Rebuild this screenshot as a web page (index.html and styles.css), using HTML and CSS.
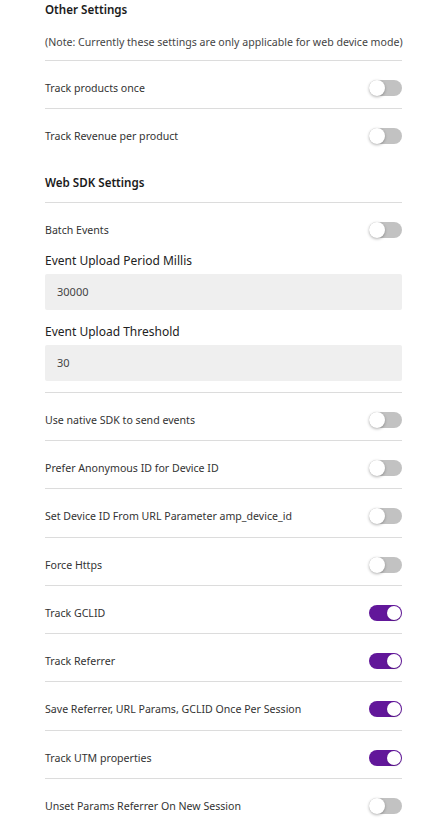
FILE: index.html
```html
<!DOCTYPE html>
<html lang="en">
<head>
<meta charset="utf-8">
<title>Settings</title>
<link rel="stylesheet" href="styles.css">
</head>
<body>
<main class="page">
  <section class="group">
    <h2 class="title title-first">Other Settings</h2>
    <p class="note">(Note: Currently these settings are only applicable for web device mode)</p>
  </section>
  <div class="row"><span class="label">Track products once</span><span class="toggle"></span></div>
  <div class="row row-last"><span class="label">Track Revenue per product</span><span class="toggle"></span></div>

  <h2 class="title">Web SDK Settings</h2>
  <div class="row row-last"><span class="label">Batch Events</span><span class="toggle"></span></div>
  <div class="fields">
    <div class="field">
      <label class="field-label">Event Upload Period Millis</label>
      <div class="input">30000</div>
    </div>
    <div class="field">
      <label class="field-label">Event Upload Threshold</label>
      <div class="input">30</div>
    </div>
  </div>
  <div class="row"><span class="label">Use native SDK to send events</span><span class="toggle"></span></div>
  <div class="row"><span class="label">Prefer Anonymous ID for Device ID</span><span class="toggle"></span></div>
  <div class="row"><span class="label">Set Device ID From URL Parameter amp_device_id</span><span class="toggle"></span></div>
  <div class="row"><span class="label">Force Https</span><span class="toggle"></span></div>
  <div class="row"><span class="label">Track GCLID</span><span class="toggle on"></span></div>
  <div class="row"><span class="label">Track Referrer</span><span class="toggle on"></span></div>
  <div class="row"><span class="label">Save Referrer, URL Params, GCLID Once Per Session</span><span class="toggle on"></span></div>
  <div class="row"><span class="label">Track UTM properties</span><span class="toggle on"></span></div>
  <div class="row row-last"><span class="label">Unset Params Referrer On New Session</span><span class="toggle"></span></div>
</main>
</body>
</html>
```
FILE: styles.css
```css
* { box-sizing: border-box; }
html, body { margin: 0; padding: 0; background: #fff; }
body {
  font-family: "Noto Sans", "Open Sans", sans-serif;
  color: #333;
}
.page {
  padding: 0 42px 0 45px;
  display: flex;
  flex-direction: column;
}
.group {
  border-bottom: 1px solid #dcdcdc;
  padding-bottom: 10px;
}
.title {
  margin: 0;
  font-size: 11.6px;
  line-height: 20px;
  font-weight: 600;
  color: #1a1a1a;
  padding: 16px 0 9px;
  border-bottom: 1px solid #dcdcdc;
}
.title-first {
  padding: 0;
  border-bottom: 0;
}
.note {
  margin: 14px 0 0;
  font-size: 10.6px;
  line-height: 16px;
  color: #444;
  white-space: nowrap;
}
.row {
  display: flex;
  align-items: flex-start;
  justify-content: space-between;
  padding: 19px 0 12.25px;
  border-bottom: 1px solid #dcdcdc;
}
.row-last { border-bottom: 0; }
.label {
  font-size: 10.6px;
  line-height: 16px;
  color: #333;
}
.toggle {
  position: relative;
  flex: none;
  width: 33px;
  height: 16px;
  border-radius: 8px;
  background: #c2c2c2;
}
.toggle::after {
  content: "";
  position: absolute;
  left: 0;
  top: 0;
  width: 16px;
  height: 16px;
  border-radius: 50%;
  background: #fff;
  box-shadow: 0 1px 3px rgba(0,0,0,0.3);
}
.toggle.on { background: #62179a; }
.toggle.on::after {
  left: auto;
  right: 1px;
  top: 1px;
  width: 14px;
  height: 14px;
  box-shadow: 0 1px 2px rgba(0,0,0,0.15);
}
.fields {
  display: flex;
  flex-direction: column;
  gap: 13px;
  padding: 2px 0 11px;
  border-bottom: 1px solid #dcdcdc;
}
.field {
  display: flex;
  flex-direction: column;
  gap: 4px;
}
.field-label {
  font-size: 12px;
  line-height: 18px;
  color: #222;
}
.input {
  height: 36px;
  background: #efefef;
  border-radius: 2px;
  padding: 0 12px;
  display: flex;
  align-items: center;
  font-size: 11px;
  color: #444;
}
```
